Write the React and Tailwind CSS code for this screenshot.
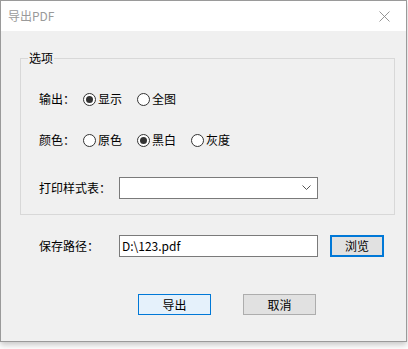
import React from 'react';

const Radio = ({ label, checked }) => (
  <span className="flex items-center w-[54px]">
    <span className="w-[13px] h-[13px] rounded-full border border-[#333333] bg-white flex items-center justify-center">
      {checked && <span className="w-[7px] h-[7px] rounded-full bg-[#333333]" />}
    </span>
    <span className="ml-[2px]">{label}</span>
  </span>
);

const App = () => {
  return (
    <div className="w-[408px] h-[349px] bg-white text-[12px] leading-none text-black font-['Microsoft_YaHei','Noto_Sans_CJK_SC',sans-serif]">
      <div className="w-[407px] h-[342px] border border-[#9a9a9a] bg-[#f0f0f0] flex flex-col shadow-[0_3px_6px_rgba(0,0,0,0.22)]">
        {/* title bar */}
        <div className="h-[30px] bg-white flex items-center justify-between pl-[7px] pr-[16px]">
          <span className="text-[#9a9a9a]">导出PDF</span>
          <svg width="11" height="11" viewBox="0 0 11 11">
            <path d="M0.5 0.5 L10.5 10.5 M10.5 0.5 L0.5 10.5" stroke="#8a8a8a" strokeWidth="0.9" fill="none" />
          </svg>
        </div>

        {/* options group */}
        <div className="relative ml-[19px] mt-[27px] w-[375px] h-[157px] border border-[#d8d8d8] flex flex-col pt-[29px] pl-[18px]">
          <span className="absolute left-[7px] top-[-7px] bg-[#f0f0f0] px-[1px]">选项</span>
          <div className="h-[22px] flex items-center">
            <span className="w-[44px]">输出：</span>
            <Radio label="显示" checked />
            <Radio label="全图" />
          </div>
          <div className="h-[22px] mt-[19px] flex items-center">
            <span className="w-[44px]">颜色：</span>
            <Radio label="原色" />
            <Radio label="黑白" checked />
            <Radio label="灰度" />
          </div>
          <div className="h-[22px] mt-[26px] flex items-center">
            <span className="w-[80px]">打印样式表：</span>
            <div className="w-[199px] h-[22px] border border-[#7a7a7a] bg-white flex items-center justify-end pr-[6px]">
              <svg width="9" height="6" viewBox="0 0 9 6">
                <path d="M0.5 0.5 L4.5 4.5 L8.5 0.5" stroke="#555" strokeWidth="1" fill="none" />
              </svg>
            </div>
          </div>
        </div>

        {/* save path */}
        <div className="mt-[20px] pl-[38px] flex items-center h-[22px]">
          <span className="w-[80px]">保存路径：</span>
          <div className="w-[199px] h-[22px] border border-[#7a7a7a] bg-white flex items-center pl-[2px]">
            D:\123.pdf
          </div>
          <button className="ml-[12px] w-[54px] h-[22px] border-2 border-[#0078d7] bg-[#e1e1e1] flex items-center justify-center">
            浏览
          </button>
        </div>

        {/* buttons */}
        <div className="mt-[37px] pl-[137px] flex items-center">
          <button className="w-[73px] h-[21px] border border-[#0078d7] bg-[#e5f1fb] flex items-center justify-center">
            导出
          </button>
          <button className="ml-[32px] w-[73px] h-[21px] border border-[#adadad] bg-[#e1e1e1] flex items-center justify-center">
            取消
          </button>
        </div>
      </div>
    </div>
  );
};

export default App;
